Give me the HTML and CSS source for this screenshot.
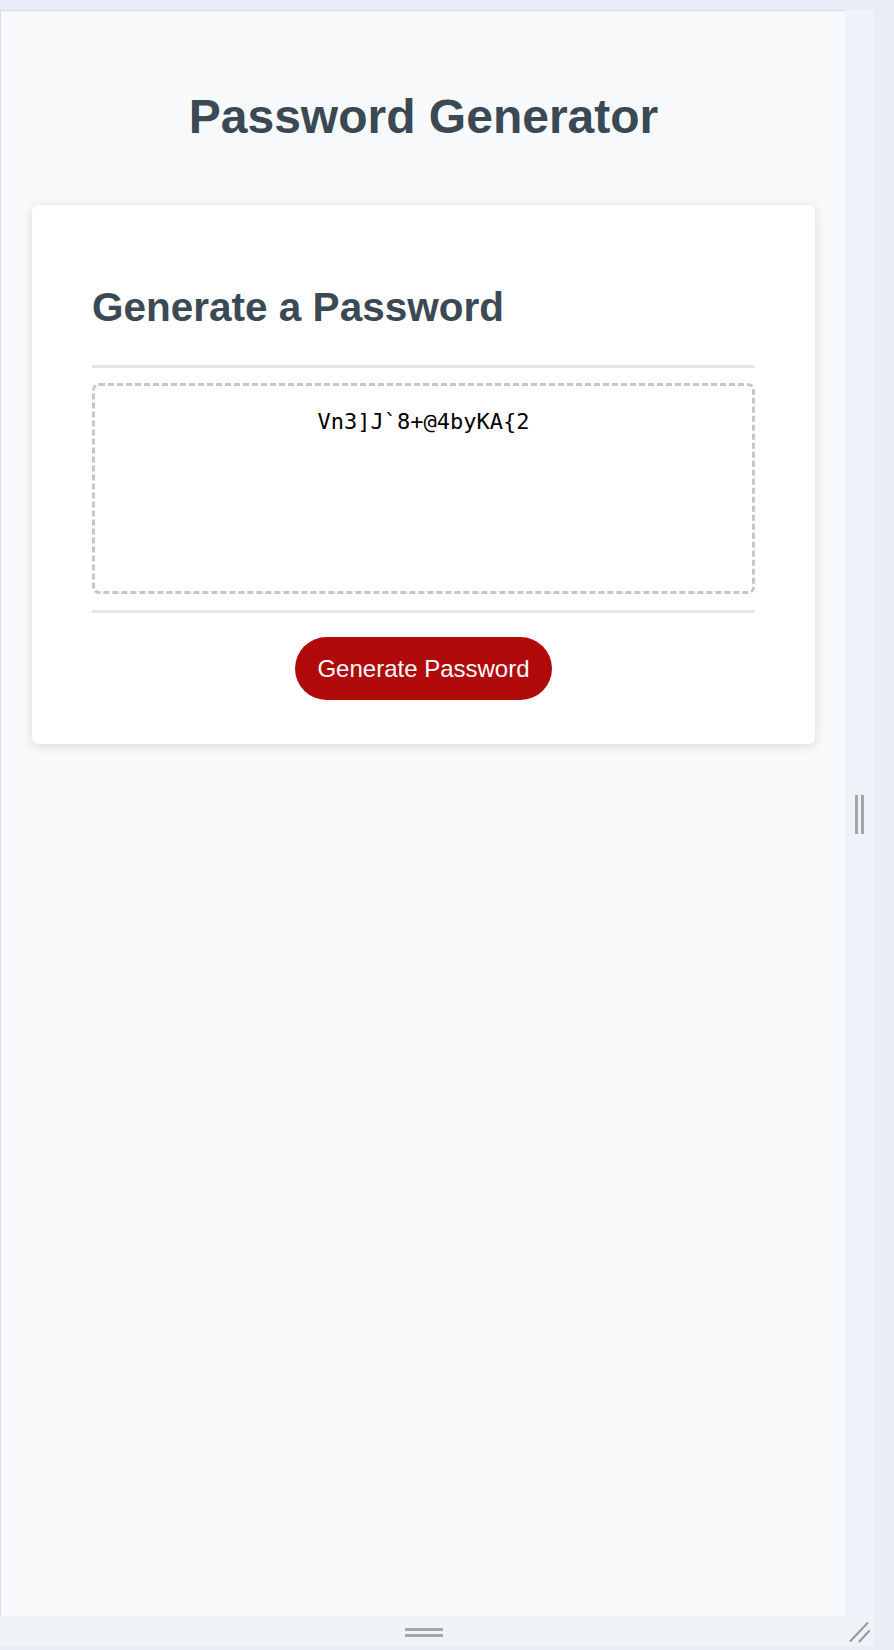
FILE: index.html
```html
<!DOCTYPE html>
<html lang="en">
<head>
<meta charset="utf-8">
<title>Password Generator</title>
<link rel="stylesheet" href="styles.css">
</head>
<body>
<div class="shell">
  <div class="workspace">
    <div class="frame">
      <main class="page">
        <h1 class="title">Password Generator</h1>
        <section class="card">
          <h2 class="card-title">Generate a Password</h2>
          <div class="card-body">
            <textarea class="password" readonly aria-label="Generated Password">Vn3]J`8+@4byKA{2</textarea>
          </div>
          <div class="card-footer">
            <button class="btn" type="button">Generate Password</button>
          </div>
        </section>
      </main>
    </div>
    <div class="v-gutter"><span class="v-handle"></span></div>
  </div>
  <div class="h-gutter">
    <div class="h-cell"><span class="h-handle"></span></div>
    <div class="grip-cell">
      <svg class="grip" width="22" height="22" viewBox="0 0 22 22" aria-hidden="true">
        <line x1="18.5" y1="2" x2="1.5" y2="20" stroke="#9a9a9a" stroke-width="2" stroke-linecap="round"/>
        <line x1="20" y1="10" x2="10.5" y2="20.5" stroke="#9a9a9a" stroke-width="2" stroke-linecap="round"/>
      </svg>
    </div>
  </div>
</div>
</body>
</html>
```

FILE: styles.css
```css
html, body {
  margin: 0;
  padding: 0;
}

body {
  background: #e9edf5;
  width: 894px;
  height: 1650px;
  overflow: hidden;
  font-family: "Liberation Sans", Arial, sans-serif;
}

.shell {
  padding-top: 10px;
  width: 874px;
}

.workspace {
  display: grid;
  grid-template-columns: 845px 29px;
  height: 1606px;
}

.frame {
  box-sizing: border-box;
  background: #f8f9fb;
  border-top: 1px solid #d8dce3;
  border-left: 1px solid #d8dce3;
  overflow: hidden;
}

.page {
  padding: 78px 30px 0 31px;
}

.title {
  margin: 0;
  font-size: 48px;
  line-height: 55px;
  font-weight: 700;
  color: #3b4954;
  text-align: center;
}

.card {
  margin-top: 61px;
  background: #ffffff;
  border-radius: 6px;
  box-shadow: 0 2px 11px rgba(0, 0, 0, 0.13);
  padding: 79px 60px 44px;
}

.card-title {
  margin: 0 0 35px;
  font-size: 40.5px;
  line-height: 46px;
  font-weight: 700;
  color: #3b4954;
}

.card-body {
  border-top: 3px solid #e6e6e6;
  border-bottom: 3px solid #e6e6e6;
  padding: 15px 0 16px;
}

.password {
  display: block;
  box-sizing: border-box;
  width: 100%;
  height: 211px;
  margin: 0;
  padding: 23px 12px 0;
  border: 3px dashed #c2c8d0;
  border-radius: 7px;
  background: #ffffff;
  color: #000000;
  font-family: "DejaVu Sans Mono", "Liberation Mono", monospace;
  font-size: 22px;
  line-height: 26px;
  text-align: center;
  resize: none;
  overflow: hidden;
  outline: none;
}

.card-footer {
  display: flex;
  justify-content: center;
  padding-top: 24px;
}

.btn {
  border: none;
  background: #b00a0a;
  color: #ffffff;
  font-family: "Liberation Sans", Arial, sans-serif;
  font-size: 24px;
  line-height: 27px;
  padding: 18px 22px;
  border-radius: 32px;
  cursor: pointer;
}

.v-gutter {
  background: #eff2f8;
  display: flex;
  align-items: center;
  justify-content: center;
}

.v-handle {
  display: block;
  box-sizing: border-box;
  width: 9px;
  height: 39px;
  border-left: 3px solid #a6a6a6;
  border-right: 3px solid #a6a6a6;
  margin-top: 2px;
}

.h-gutter {
  display: grid;
  grid-template-columns: 845px 29px;
  height: 30px;
  background: #eff2f7;
}

.h-cell {
  display: flex;
  align-items: center;
  justify-content: center;
  padding-left: 3px;
}

.h-handle {
  display: block;
  box-sizing: border-box;
  width: 38px;
  height: 9px;
  border-top: 3px solid #a6a6a6;
  border-bottom: 3px solid #a6a6a6;
  margin-top: 3px;
}

.grip-cell {
  display: flex;
  align-items: flex-start;
  padding: 5px 0 0 4px;
}

.grip {
  display: block;
}
```
